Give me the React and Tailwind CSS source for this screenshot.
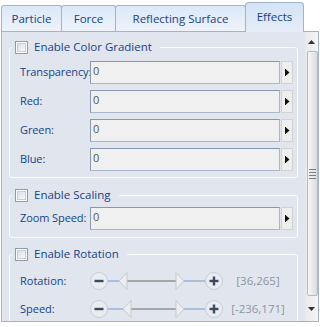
import React from 'react'

const tabs = [
  { label: 'Particle', w: 'w-[61px]' },
  { label: 'Force', w: 'w-[55px]' },
  { label: 'Reflecting Surface', w: 'w-[131px]' },
]

function Checkbox() {
  return (
    <span className="w-[13px] h-[13px] shrink-0 border border-[#8e9bad] bg-white p-[1px]">
      <span className="block w-full h-full border border-[#c6ced8] bg-gradient-to-br from-[#d9e0e9] to-[#f7f9fb]" />
    </span>
  )
}

function Group({ title, className, children }) {
  return (
    <fieldset className={`mx-[7px] border border-[#fbfcfd] rounded-[3px] ${className}`}>
      <legend className="ml-[2px] pl-[3px] pr-[8px] flex items-center gap-[6px] h-[14px] text-[#15428b]">
        <Checkbox />
        <span className="leading-[14px] text-[11.5px]">{title}</span>
      </legend>
      {children}
    </fieldset>
  )
}

function Field({ label, value = '0' }) {
  return (
    <div className="flex items-center h-[23px] pl-[10px]">
      <span className="w-[70px] shrink-0 whitespace-nowrap text-[#15428b] tracking-[-0.1px]">{label}</span>
      <div className="w-[190px] h-[23px] border border-[#a9b7ca] border-t-[#8798b0] border-l-[#8798b0] bg-[#f0f0f0] pl-[2px] flex items-center pb-[2px] text-[#555]">
        {value}
      </div>
      <div className="ml-[1px] w-[12px] h-[23px] border border-[#d2d2d2] bg-[#eeeeee] flex items-center justify-center">
        <svg width="5" height="7" viewBox="0 0 5 7">
          <rect x="0" y="0" width="1" height="7" fill="#111" />
          <path d="M1 0.5 L4.5 3.5 L1 6.5 Z" fill="#111" />
        </svg>
      </div>
    </div>
  )
}

function RoundBtn({ plus }) {
  return (
    <svg width="18" height="18" viewBox="0 0 18 18" className="shrink-0">
      <circle cx="9" cy="9" r="8.5" fill="#e9ecf0" stroke="#c8cdd4" />
      <rect x="4.5" y="7.8" width="9" height="2.4" fill="#3c4a5e" />
      {plus && <rect x="7.8" y="4.5" width="2.4" height="9" fill="#3c4a5e" />}
    </svg>
  )
}

function Slider({ label, left, right, value }) {
  return (
    <div className="flex items-center h-[18px] pl-[10px]">
      <span className="w-[70px] shrink-0 text-[#15428b]">{label}</span>
      <RoundBtn />
      <svg width="97" height="18" viewBox="0 0 97 18" className="shrink-0">
        <line x1="0" y1="9" x2="97" y2="9" stroke="#7398c9" strokeWidth="1" />
        <line x1={left + 7} y1="9" x2={right} y2="9" stroke="#a6a6a6" strokeWidth="2" />
        <path d={`M${left} 9 L${left + 8} 0.5 L${left + 8} 17.5 Z`} fill="#eceef1" stroke="#c6c9cd" />
        <path d={`M${right + 8} 9 L${right} 0.5 L${right} 17.5 Z`} fill="#eceef1" stroke="#c6c9cd" />
      </svg>
      <RoundBtn plus />
      <span className="w-[70px] text-center text-[#8a96a7] text-[11.5px]">{value}</span>
    </div>
  )
}

export default function App() {
  return (
    <div className="w-[320px] h-[327px] bg-white flex flex-col text-[11px] font-['Open_Sans','Noto_Sans',sans-serif] overflow-hidden">
      {/* Tabs */}
      <div className="h-[31px] flex items-end pl-[1px] shrink-0 text-[11.5px]">
        {tabs.map((t, i) => (
          <div key={t.label}
            className={`${t.w} ${i ? '-ml-px' : ''} h-[26px] border border-b-0 border-[#a3b3c8] rounded-t-[3px] bg-gradient-to-b from-[#dce8f8] to-[#eef3fa] flex items-center justify-center text-[#15428b]`}>
            {t.label}
          </div>
        ))}
        <div className="-ml-px w-[59px] h-[30px] -mb-px relative z-10 border border-b-0 border-[#a3b3c8] rounded-t-[4px] bg-gradient-to-b from-[#d3e3f8] to-[#e6edf6] flex items-center justify-center pb-[2px] text-[#15428b]">
          Effects
        </div>
      </div>

      {/* Panel */}
      <div className="ml-[1px] w-[318px] h-[291px] shrink-0 border border-[#a3b3c8] flex">
        <div className="flex-1 overflow-hidden bg-[#e1e6ee] pt-[8px]">
          <Group title="Enable Color Gradient" className="pt-[7px] pb-[6px]">
            <div className="flex flex-col gap-[6px]">
              <Field label="Transparency:" />
              <Field label="Red:" />
              <Field label="Green:" />
              <Field label="Blue:" />
            </div>
          </Group>
          <Group title="Enable Scaling" className="mt-[10px] pt-[5px] pb-[7px]">
            <Field label="Zoom Speed:" />
          </Group>
          <Group title="Enable Rotation" className="mt-[9px] pt-[11px] pb-[12px]">
            <div className="flex flex-col gap-[10px]">
              <Slider label="Rotation:" left={11} right={68} value="[36,265]" />
              <Slider label="Speed:" left={15} right={68} value="[-236,171]" />
            </div>
          </Group>
        </div>

        {/* Scrollbar */}
        <div className="w-[13px] shrink-0 flex flex-col bg-gradient-to-r from-[#e9e9e9] to-[#f5f5f5]">
          <div className="h-[19px] flex items-center justify-center">
            <svg width="7" height="4" viewBox="0 0 7 4"><path d="M0 4 L3.5 0 L7 4 Z" fill="#333" /></svg>
          </div>
          <div className="h-[245px] ml-[2px] border border-[#b9b9b9] rounded-[2px] bg-gradient-to-r from-[#f7f7f7] to-[#dcdcdc] flex items-center justify-center">
            <div className="flex flex-col gap-[2px] w-[7px]">
              <span className="h-px bg-[#7d7d7d]" />
              <span className="h-px bg-[#7d7d7d]" />
              <span className="h-px bg-[#7d7d7d]" />
              <span className="h-px bg-[#7d7d7d]" />
            </div>
          </div>
          <div className="flex-1 flex items-center justify-center">
            <svg width="7" height="4" viewBox="0 0 7 4"><path d="M0 0 L3.5 4 L7 0 Z" fill="#333" /></svg>
          </div>
        </div>
      </div>
    </div>
  )
}
